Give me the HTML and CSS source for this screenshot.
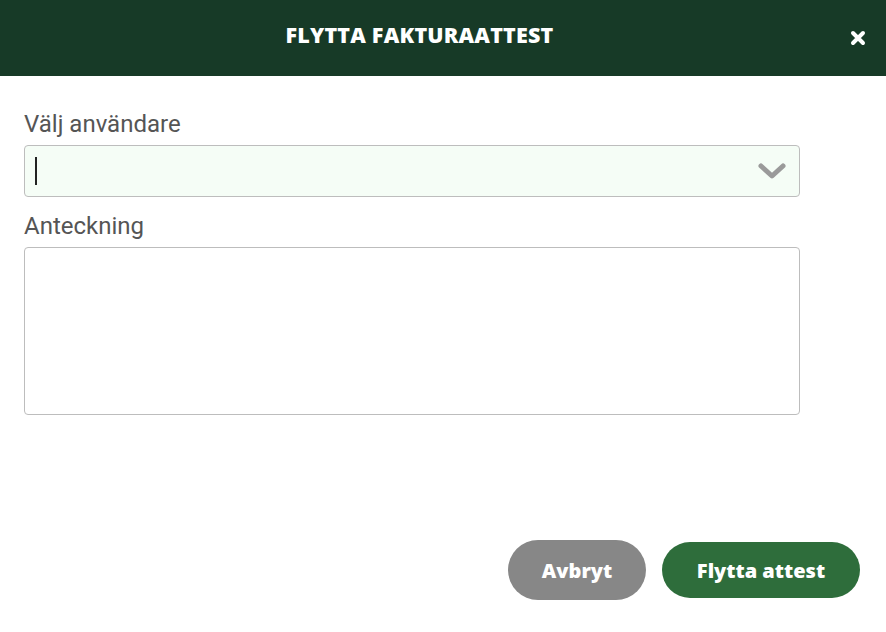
FILE: index.html
```html
<!DOCTYPE html>
<html>
  <head>
    <title>Flytta fakturaattest</title>
    <link rel="stylesheet" href="styles.css">
  </head>
  <body>
    <div class="modal">
      <div class="modal-header">
        <h1>FLYTTA FAKTURAATTEST</h1>
        <button class="close" type="button" aria-label="Stäng">
          <svg width="16" height="16" viewBox="0 0 16 16">
            <path d="M3 3 L13 13 M13 3 L3 13" stroke="#fff" stroke-width="4" stroke-linecap="round" />
          </svg>
        </button>
      </div>
      <form class="modal-body">
        <label for="user">Välj användare</label>
        <div class="select">
          <span class="caret"></span>
          <svg class="chevron" width="30" height="18" viewBox="0 0 30 18">
            <path d="M4 4 L15 14 L26 4" fill="none" stroke="#9a9a9a" stroke-width="5" stroke-linecap="round" stroke-linejoin="round" />
          </svg>
        </div>
        <label for="note">Anteckning</label>
        <textarea id="note" name="note"></textarea>
        <div class="actions">
          <button type="reset" class="btn btn-cancel">Avbryt</button>
          <button type="submit" class="btn btn-primary">Flytta attest</button>
        </div>
      </form>
    </div>
  </body>
</html>
```
FILE: styles.css
```css
body {
  margin: 0;
  background: #fff;
  font-family: Roboto, "Liberation Sans", sans-serif;
}
.modal {
  width: 886px;
  height: 632px;
  display: flex;
  flex-direction: column;
}
.modal-header {
  height: 76px;
  background: #173a27;
  display: flex;
  align-items: center;
  justify-content: center;
  padding-right: 47px;
  position: relative;
}
.modal-header h1 {
  margin: 0 0 8px 0;
  color: #fff;
  font-family: "Open Sans", sans-serif;
  font-weight: 800;
  font-size: 21.5px;
  letter-spacing: 0.2px;
}
.close {
  position: absolute;
  right: 20px;
  top: 30px;
  background: none;
  border: none;
  padding: 0;
  cursor: pointer;
}
.modal-body {
  flex: 1;
  display: flex;
  flex-direction: column;
  padding: 34px 86px 32px 24px;
}
.modal-body label {
  color: #555;
  font-size: 24px;
  line-height: 28px;
  margin-bottom: 7px;
}
.select {
  height: 50px;
  background: #f5fdf6;
  border: 1px solid #bdbdbd;
  border-radius: 4px;
  display: flex;
  align-items: center;
  justify-content: space-between;
  padding: 0 12px 0 10px;
  margin-bottom: 15px;
}
.caret {
  width: 2px;
  height: 28px;
  background: #222;
}
.modal-body textarea {
  height: 168px;
  border: 1px solid #bdbdbd;
  border-radius: 4px;
  resize: none;
  padding: 8px;
  box-sizing: border-box;
}
.actions {
  margin-top: auto;
  margin-right: -60px;
  display: flex;
  justify-content: flex-end;
  align-items: center;
  gap: 16px;
}
.btn {
  border: none;
  color: #fff;
  font-family: "Open Sans", sans-serif;
  font-weight: 800;
  font-size: 20px;
  border-radius: 30px;
  cursor: pointer;
}
.btn-cancel {
  background: #878787;
  width: 138px;
  height: 60px;
}
.btn-primary {
  background: #2e6d3b;
  width: 198px;
  height: 56px;
}
```
